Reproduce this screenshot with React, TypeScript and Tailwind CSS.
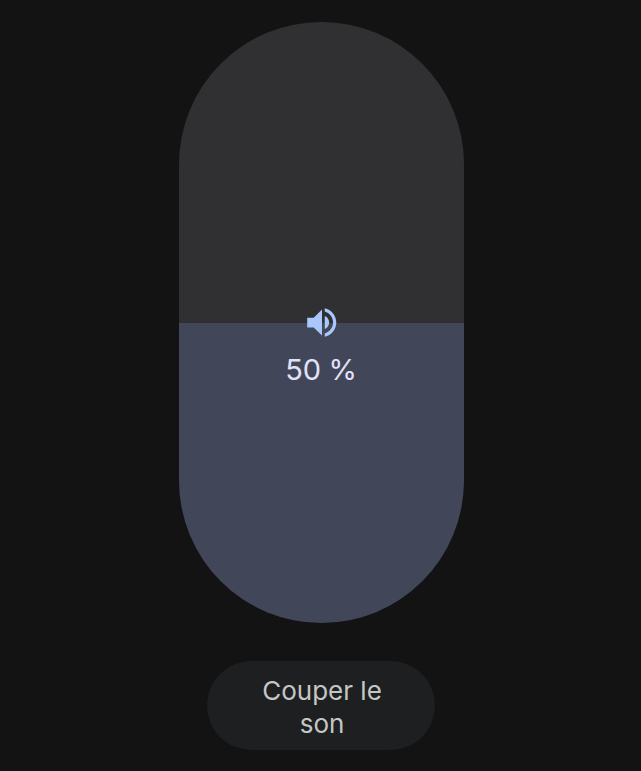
export default function App() {
  return (
    <main className="flex h-[771px] w-[641px] flex-col items-center overflow-hidden bg-[#131313] pt-[22px] pl-[1px] font-['Inter',sans-serif]">
      <div className="flex h-[601px] w-[285px] flex-col items-center overflow-hidden rounded-full bg-[linear-gradient(#303032_301px,#424659_301px)] pt-[281px]">
        <svg className="h-[39px] w-[39px] shrink-0 fill-[#a8c7fa]" viewBox="0 0 24 24" aria-hidden="true">
          <path d="M3.2 9v6h4l5.1 5V4L7.2 9h-4zm13.5 3A4.5 4.5 0 0 0 14 7.97v8.05c1.68-.73 2.7-2.25 2.7-4.02zM14 3.23v2.06c2.89.86 5.1 3.54 5.1 6.71s-2.21 5.85-5.1 6.71v2.06c4.01-.91 7.1-4.49 7.1-8.77s-3.09-7.86-7.1-8.77z" />
        </svg>
        <span className="mt-[10px] text-[29px] leading-[36px] tracking-[-0.3px] text-[#e0e1fb]">50 %</span>
      </div>
      <button className="mt-[38px] h-[89px] w-[228px] rounded-full bg-[#1e1f20] pr-[43px] pl-[45px] pt-[3px] text-[26px] leading-[33px] text-[#c4c7c5]">
        Couper le son
      </button>
    </main>
  );
}
